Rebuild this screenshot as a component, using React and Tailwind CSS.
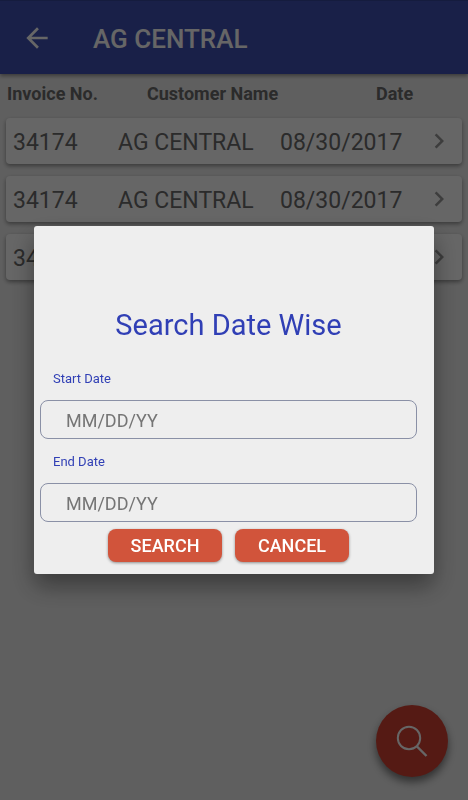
import { useState } from 'react'
import { MdArrowBack, MdChevronRight } from 'react-icons/md'

const invoices = [
  { id: 1, number: '34174', customer: 'AG CENTRAL', date: '08/30/2017' },
  { id: 2, number: '34174', customer: 'AG CENTRAL', date: '08/30/2017' },
  { id: 3, number: '34174', customer: 'AG CENTRAL', date: '08/30/2017' },
]

function AppBar({ title }) {
  return (
    <header className="flex h-[74px] items-center gap-10 border-t border-[#36469c] bg-[#3f51b5] px-[21px] text-white shadow-[0_2px_4px_rgba(0,0,0,0.4)]">
      <button type="button" aria-label="Back">
        <MdArrowBack className="size-8" />
      </button>
      <h1 className="pt-1 text-[26px] font-medium">{title}</h1>
    </header>
  )
}

function InvoiceTable({ rows }) {
  return (
    <table className="block px-1.5">
      <thead className="block">
        <tr className="flex h-11 items-center pb-1 text-left text-lg text-[#6b6b6b]">
          <th className="w-[141px] pl-px">Invoice No.</th>
          <th className="flex-1">Customer Name</th>
          <th className="w-[86px]">Date</th>
        </tr>
      </thead>
      <tbody className="flex flex-col gap-3">
        {rows.map((row) => (
          <tr
            key={row.id}
            className="flex h-[46px] items-center rounded bg-white pl-[7px] text-[23px] text-[#6b6b6b] shadow-[0_2px_4px_rgba(0,0,0,0.4)]"
          >
            <td className="w-[105px] pt-1">{row.number}</td>
            <td className="w-[162px] pt-1">{row.customer}</td>
            <td className="flex-1 pt-1">{row.date}</td>
            <td className="w-[38px]">
              <button type="button" aria-label="Open invoice" className="block">
                <MdChevronRight className="size-[30px] text-[#999]" />
              </button>
            </td>
          </tr>
        ))}
      </tbody>
    </table>
  )
}

function DateField({ id, label, value, onChange }) {
  return (
    <div className="flex flex-col">
      <label htmlFor={id} className="flex h-11 items-center pt-0.5 pl-[13px] text-[13px] text-[#303fb5]">
        {label}
      </label>
      <input
        id={id}
        type="text"
        placeholder="MM/DD/YY"
        value={value}
        onChange={(e) => onChange(e.target.value)}
        className="h-[39px] w-full rounded-lg border border-[#8a90a6] bg-transparent px-[25px] pt-0.5 text-lg text-[#333] placeholder:text-[#757575]"
      />
    </div>
  )
}

function DialogButton({ children, ...props }) {
  return (
    <button
      className="h-[33px] w-[114px] rounded-lg bg-[#d1543b] text-lg font-medium text-white shadow-[0_1px_3px_rgba(0,0,0,0.4)]"
      {...props}
    >
      {children}
    </button>
  )
}

function SearchDialog({ onClose }) {
  const [start, setStart] = useState('')
  const [end, setEnd] = useState('')

  return (
    <div className="fixed inset-0 flex items-center justify-center bg-black/60 px-[34px]">
      <form
        role="dialog"
        aria-labelledby="search-title"
        onSubmit={(e) => e.preventDefault()}
        className="w-full rounded-[3px] bg-[#eee] pt-20 pr-[17px] pb-3 pl-1.5 shadow-[0_12px_24px_rgba(0,0,0,0.4)]"
      >
        <h2 id="search-title" className="pb-3 text-center text-[29px] leading-[38px] text-[#303fb5]">
          Search Date Wise
        </h2>
        <DateField id="start-date" label="Start Date" value={start} onChange={setStart} />
        <DateField id="end-date" label="End Date" value={end} onChange={setEnd} />
        <div className="flex justify-center gap-[13px] pt-[7px]">
          <DialogButton type="submit">SEARCH</DialogButton>
          <DialogButton type="button" onClick={onClose}>
            CANCEL
          </DialogButton>
        </div>
      </form>
    </div>
  )
}

export default function App() {
  const [searching, setSearching] = useState(true)

  return (
    <div className="min-h-screen bg-[#eee] font-[Roboto,sans-serif]">
      <AppBar title="AG CENTRAL" />
      <InvoiceTable rows={invoices} />

      <button
        type="button"
        aria-label="Search by date"
        onClick={() => setSearching(true)}
        className="fixed right-5 bottom-[23px] flex size-[72px] items-center justify-center rounded-full bg-[#d54132] text-white shadow-[0_5px_9px_rgba(0,0,0,0.5)]"
      >
        <svg viewBox="0 0 32 32" className="size-8" fill="none" stroke="currentColor" strokeWidth="2">
          <circle cx="13" cy="13" r="11.2" />
          <path d="M20.5 21 L30.5 31" strokeWidth="2.4" />
        </svg>
      </button>

      {searching && <SearchDialog onClose={() => setSearching(false)} />}
    </div>
  )
}
